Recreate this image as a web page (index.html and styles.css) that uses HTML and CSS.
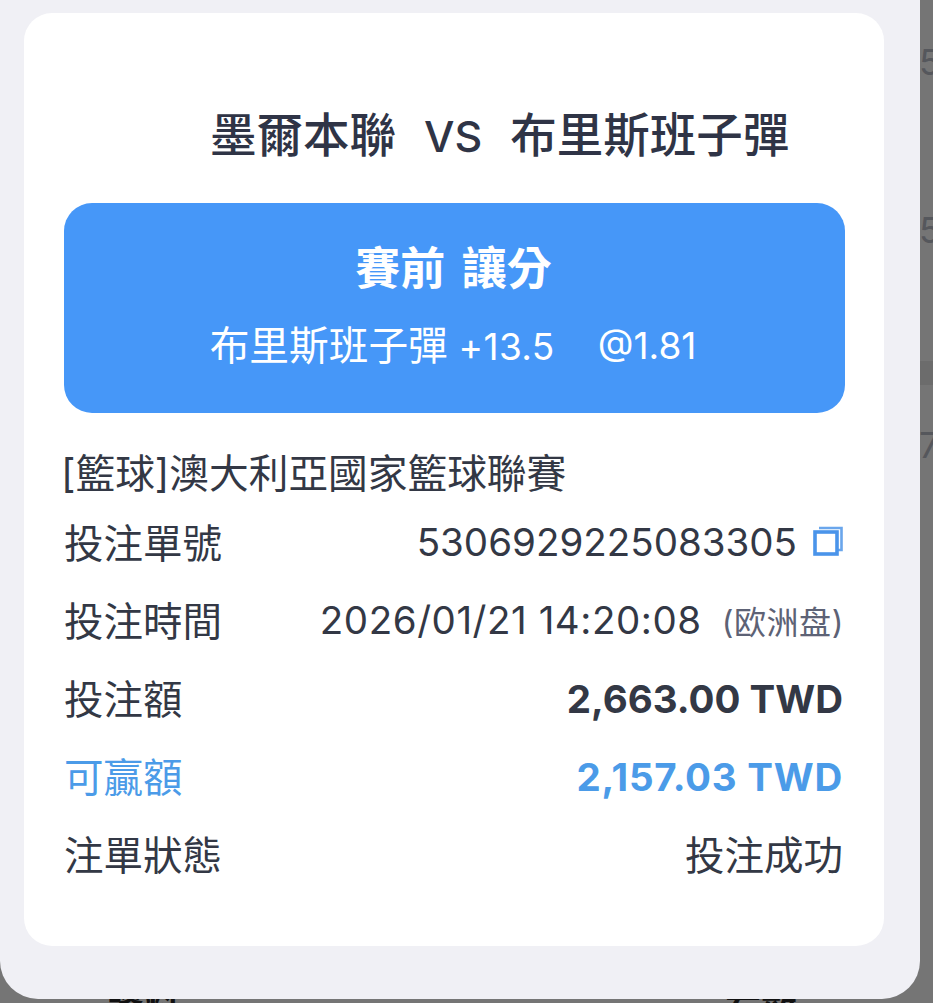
FILE: index.html
```html
<!DOCTYPE html>
<html lang="zh-Hant">
  <head>
    <meta charset="UTF-8" />
    <meta name="viewport" content="width=device-width, initial-scale=1.0" />
    <title>注單詳情</title>
    <link rel="stylesheet" href="styles.css">
  </head>

  <body>
    <!-- 後面被遮住的頁面 -->
    <div class="behind behind-a">5</div>
    <div class="behind behind-b">5</div>
    <div class="behind behind-c">7</div>
    <div class="behind-band"></div>
    <div class="behind-bottom behind-bottom-left">資料</div>
    <div class="behind-bottom behind-bottom-right">有效</div>

    <div class="sheet">
      <div class="card">
        <h2 class="match">墨爾本聯<span class="vs">VS</span>布里斯班子彈</h2>

        <div class="banner">
          <div class="banner-title">賽前 讓分</div>
          <div class="banner-pick">
            <span>布里斯班子彈<span class="pick-num pick-line"> +13.5</span></span>
            <span class="pick-num">@1.81</span>
          </div>
        </div>

        <div class="league">[籃球]澳大利亞國家籃球聯賽</div>

        <div class="row">
          <span>投注單號</span>
          <span class="value num">
            5306929225083305
            <svg class="copy" viewBox="0 0 30 30" width="30" height="30" aria-hidden="true">
              <path d="M6 2h22.5v22h-4" fill="none" stroke="#6aa6ec" stroke-width="2.6" />
              <rect x="2" y="6" width="22" height="22" fill="none" stroke="#4a94ea" stroke-width="3.6" />
            </svg>
          </span>
        </div>
        <div class="row">
          <span>投注時間</span>
          <span class="value num num-wide">2026/01/21 14:20:08<small class="odds-type">(欧洲盘)</small></span>
        </div>
        <div class="row">
          <span>投注額</span>
          <span class="value num amount">2,663.00 TWD</span>
        </div>
        <div class="row row-win">
          <span>可贏額</span>
          <span class="value num num-wide amount">2,157.03 TWD</span>
        </div>
        <div class="row">
          <span>注單狀態</span>
          <span class="value">投注成功</span>
        </div>
      </div>
    </div>
  </body>
</html>
```

FILE: styles.css
```css
* {
  box-sizing: border-box;
}

html,
body {
  height: 100%;
}

body {
  margin: 0;
  height: 1003px;
  overflow: hidden;
  position: relative;
  background-color: #757575;
  font-family: Inter, "Noto Sans CJK TC", sans-serif;
  color: #333845;
}

.behind {
  position: absolute;
  left: 919px;
  font-size: 36px;
  line-height: 40px;
  color: #55575c;
}

.behind-a {
  top: 42px;
}

.behind-b {
  top: 210px;
}

.behind-c {
  top: 425px;
}

.behind-band {
  position: absolute;
  left: 920px;
  right: 0;
  top: 361px;
  height: 24px;
  background-color: #6c6c6c;
}

.behind-bottom {
  position: absolute;
  top: 985px;
  font-size: 36px;
  line-height: 50px;
  font-weight: 700;
  color: #111;
}

.behind-bottom-left {
  left: 108px;
}

.behind-bottom-right {
  left: 725px;
}

.sheet {
  position: relative;
  width: 920px;
  height: 999px;
  padding: 13px 36px 0 24px;
  background-color: #f0f0f5;
  border-radius: 0 0 38px 38px;
}

.card {
  height: 933px;
  padding: 92px 39px 0 40px;
  background-color: white;
  border-radius: 28px;
}

.match {
  margin: 0;
  height: 60px;
  padding-left: 146px;
  font-size: 46.5px;
  line-height: 60px;
  font-weight: 500;
  color: #2f3446;
  white-space: nowrap;
}

.vs {
  margin: 0 28px;
  font-size: 43px;
}

.banner {
  margin-top: 38px;
  height: 210px;
  padding-top: 36px;
  text-align: center;
  color: white;
  background-color: #4697f8;
  border-radius: 28px;
}

.banner-title {
  padding-right: 2px;
  font-size: 45px;
  line-height: 60px;
  font-weight: 700;
  word-spacing: 6px;
}

.banner-pick {
  display: flex;
  justify-content: center;
  gap: 43px;
  margin-top: 22px;
  padding-right: 3px;
  font-size: 39.7px;
  line-height: 50px;
}

.pick-num {
  font-size: 37px;
}

.pick-line {
  letter-spacing: 0.4px;
}

.league {
  margin-top: 35px;
  margin-left: -3px;
  font-size: 39.7px;
  line-height: 52px;
  white-space: nowrap;
}

.row {
  display: flex;
  justify-content: space-between;
  align-items: center;
  height: 78px;
  padding-right: 2px;
  font-size: 39.5px;
  white-space: nowrap;
}

.league + .row {
  margin-top: 1px;
}

.value {
  display: flex;
  align-items: center;
}

.num {
  padding-top: 4px;
  font-size: 38.5px;
}

.num-wide {
  letter-spacing: 0.55px;
}

.copy {
  margin-left: 16px;
  margin-top: -3px;
}

.odds-type {
  margin-left: 20px;
  margin-right: -1px;
  font-size: 32px;
  letter-spacing: 0.6px;
  color: #5d6275;
}

.amount {
  padding-top: 6px;
  font-weight: 700;
}

.row-win {
  color: #4b9be8;
}

.row-win .amount {
  letter-spacing: 0.75px;
}
```
